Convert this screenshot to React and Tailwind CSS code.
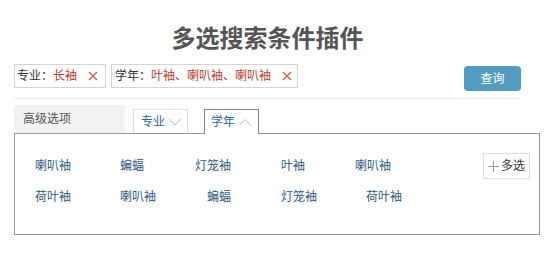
const font = { fontFamily: '"Liberation Sans", "Noto Sans CJK SC", sans-serif' };

function Cross() {
  return (
    <svg width="10" height="10" viewBox="0 0 10 10" className="ml-[11px]">
      <path d="M1 1L9 9M9 1L1 9" stroke="#de5a45" strokeWidth="1.4" fill="none" />
    </svg>
  );
}

function Chevron({ up }) {
  return (
    <svg width="14" height="8" viewBox="0 0 14 8" className="ml-[3px]">
      <path d={up ? "M1 7.5L7 1.5L13 7.5" : "M1 1L7 7L13 1"} stroke="#bbb" strokeWidth="1" fill="none" />
    </svg>
  );
}

const row1 = [
  ["喇叭袖", "w-[85px]"],
  ["蝙蝠", "w-[75px]"],
  ["灯笼袖", "w-[86px]"],
  ["叶袖", "w-[74px]"],
  ["喇叭袖", "w-[80px]"],
];
const row2 = [
  ["荷叶袖", "w-[85px]"],
  ["喇叭袖", "w-[87px]"],
  ["蝙蝠", "w-[74px]"],
  ["灯笼袖", "w-[85px]"],
  ["荷叶袖", "w-[80px]"],
];

export default function App() {
  return (
    <div className="w-[551px] h-[276px] bg-white text-[12px] text-[#333]" style={font}>
      <div className="pt-[24px] pl-[14px]">
        <h1 className="w-[507px] text-center text-[24px] leading-[30px] font-bold text-[#555]">
          多选搜索条件插件
        </h1>

        <div className="flex items-start mt-[10px] w-[507px]">
          <div className="flex items-center h-[24px] border border-[#d4d4d4] pl-[2px] pr-[7px]">
            <span>专业：</span>
            <span className="text-[#c0392b]">长袖</span>
            <Cross />
          </div>
          <div className="flex items-center h-[24px] border border-[#d4d4d4] pl-[3px] pr-[5px] ml-[5px]">
            <span>学年：</span>
            <span className="text-[#c0392b]">叶袖、喇叭袖、喇叭袖</span>
            <Cross />
          </div>
          <button className="ml-auto mt-[2px] w-[57px] h-[25px] rounded-[4px] bg-[#529cc0] text-white text-[12px]">
            查询
          </button>
        </div>

        <div className="mt-[7px] w-[506px] border-t border-[#e8e8e8]" />

        <div className="flex items-end mt-[6px] h-[28px]">
          <div className="w-[111px] h-[28px] bg-[#f2f2f2] flex items-center pl-[9px] text-[#555]">
            高级选项
          </div>
          <div className="ml-[8px] w-[55px] h-[24px] border border-b-0 border-[#ddd] flex items-center pl-[7px] text-[#2b6a99]">
            专业
            <Chevron />
          </div>
          <div className="relative z-10 -mb-px ml-[16px] w-[55px] h-[25px] border border-b-0 border-[#888] bg-white flex items-center pl-[6px] text-[#2b6a99]">
            学年
            <Chevron up />
          </div>
        </div>

        <div className="w-[526px] h-[102px] border border-[#999] flex">
          <div className="pl-[20px] pt-[25px] flex flex-col gap-[17px] text-[#2d5a82]">
            <div className="flex leading-[14px]">
              {row1.map(([t, w], i) => (
                <span key={i} className={w}>{t}</span>
              ))}
            </div>
            <div className="flex leading-[14px]">
              {row2.map(([t, w], i) => (
                <span key={i} className={w}>{t}</span>
              ))}
            </div>
          </div>
          <div className="ml-auto mr-[9px] mt-[19px]">
            <div className="w-[47px] h-[26px] border border-[#ddd] flex items-center justify-center">
              <svg width="11" height="11" viewBox="0 0 11 11" className="mr-[2px]">
                <path d="M5.5 0V11M0 5.5H11" stroke="#999" strokeWidth="1" fill="none" />
              </svg>
              <span>多选</span>
            </div>
          </div>
        </div>
      </div>
    </div>
  );
}
